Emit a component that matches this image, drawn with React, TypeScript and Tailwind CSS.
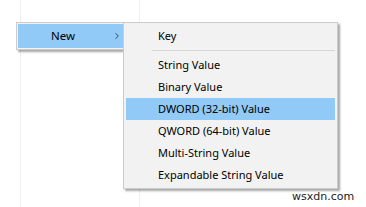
import { ChevronRight } from 'lucide-react';

const items = [
    'String Value',
    'Binary Value',
    'DWORD (32-bit) Value',
    'QWORD (64-bit) Value',
    'Multi-String Value',
    'Expandable String Value',
];

export default function App() {
    return (
        <div className="relative w-[366px] h-[207px] bg-white overflow-hidden" style={{ fontFamily: '"Noto Sans", "Open Sans", sans-serif' }}>
            {/* faint list view column lines */}
            <div className="flex h-full">
                <div className="w-[20px]" />
                <div className="w-[120px] h-full border-x border-[#eeeeee]" />
            </div>

            {/* parent menu */}
            <div className="absolute left-[16px] top-[22px] w-[112px] border border-[#cccccc] bg-[#f2f2f2] p-[1px] pr-0 shadow-[2px_2px_2px_rgba(0,0,0,0.35)]">
                <div className="flex items-center h-[24px] bg-[#91c9f7] pl-[33px] pr-[5px] text-[11.5px] text-black">
                    <span className="flex-1">New</span>
                    <ChevronRight className="w-[10px] h-[10px]" strokeWidth={1.5} />
                </div>
            </div>

            {/* submenu */}
            <div className="absolute left-[123px] top-[22px] w-[215px] border border-[#cccccc] bg-[#f2f2f2] px-[2px] pt-[2px] pb-[2px] shadow-[2px_2px_2px_rgba(0,0,0,0.35)] text-[11px] text-black">
                <div className="flex items-center h-[22px] pl-[32px]">Key</div>
                <div className="h-[1px] bg-[#d7d7d7] my-[3px] ml-[26px]" />
                {items.map((label) => (
                    <div
                        key={label}
                        className={`flex items-center h-[22px] pl-[32px] ${label === 'DWORD (32-bit) Value' ? 'bg-[#91c9f7]' : ''}`}
                    >
                        {label}
                    </div>
                ))}
            </div>

            {/* watermark */}
            <div className="absolute left-[292px] top-[189px] text-[11px] text-[#222]" style={{ fontFamily: '"DejaVu Sans", sans-serif' }}>
                wsxdn.com
            </div>
        </div>
    );
}
